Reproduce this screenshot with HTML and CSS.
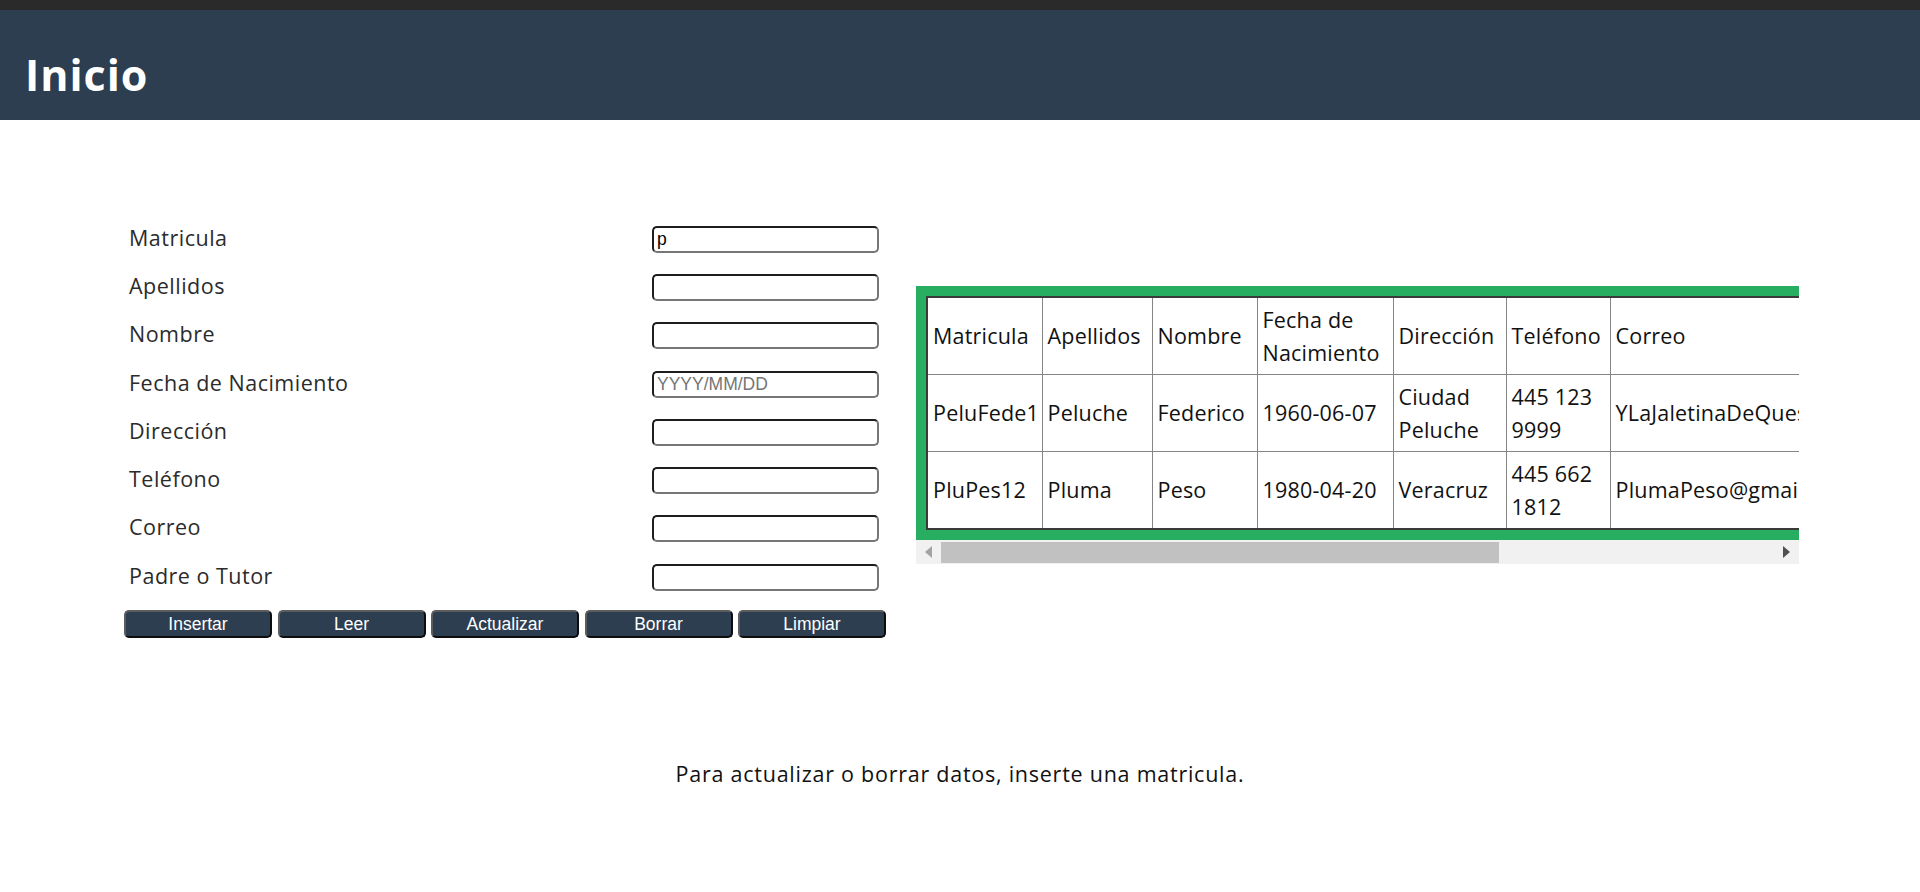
FILE: index.html
```html
<!DOCTYPE html>
<html lang="es">
<head>
<meta charset="utf-8">
<title>Inicio</title>
<link rel="stylesheet" href="styles.css">
</head>
<body>
<div class="topbar"></div>
<header class="header"><h1 class="title">Inicio</h1></header>
<main class="main">
  <section class="form">
    <div class="field"><label class="label">Matricula</label><input class="input" type="text" value="p"></div>
    <div class="field"><label class="label">Apellidos</label><input class="input" type="text"></div>
    <div class="field"><label class="label">Nombre</label><input class="input" type="text"></div>
    <div class="field"><label class="label">Fecha de Nacimiento</label><input class="input" type="text" placeholder="YYYY/MM/DD"></div>
    <div class="field"><label class="label">Dirección</label><input class="input" type="text"></div>
    <div class="field"><label class="label">Teléfono</label><input class="input" type="text"></div>
    <div class="field"><label class="label">Correo</label><input class="input" type="text"></div>
    <div class="field"><label class="label">Padre o Tutor</label><input class="input" type="text"></div>
    <div class="buttons">
      <button class="btn">Insertar</button>
      <button class="btn">Leer</button>
      <button class="btn">Actualizar</button>
      <button class="btn">Borrar</button>
      <button class="btn">Limpiar</button>
    </div>
  </section>
  <section class="data">
    <div class="scroller">
      <div class="green">
        <table class="table">
          <colgroup>
            <col class="c1"><col class="c2"><col class="c3"><col class="c4"><col class="c5"><col class="c6"><col class="c7"><col class="c8">
          </colgroup>
          <tr><td>Matricula</td><td>Apellidos</td><td>Nombre</td><td>Fecha de Nacimiento</td><td>Dirección</td><td>Teléfono</td><td>Correo</td><td>Padre o Tutor</td></tr>
          <tr><td>PeluFede1</td><td>Peluche</td><td>Federico</td><td>1960-06-07</td><td>Ciudad Peluche</td><td>445 123 9999</td><td>YLaJaletinaDeQueso@gmail.com</td><td>Peluchón</td></tr>
          <tr><td>PluPes12</td><td>Pluma</td><td>Peso</td><td>1980-04-20</td><td>Veracruz</td><td>445 662 1812</td><td>PlumaPeso@gmail.com</td><td>Plumón</td></tr>
        </table>
      </div>
    </div>
    <div class="scrollbar">
      <div class="sb-btn"><span class="arrow-left"></span></div>
      <div class="thumb"></div>
      <div class="sb-space"></div>
      <div class="sb-btn"><span class="arrow-right"></span></div>
    </div>
  </section>
</main>
<p class="note">Para actualizar o borrar datos, inserte una matricula.</p>
</body>
</html>
```
FILE: styles.css
```css
html, body {
  margin: 0;
  padding: 0;
  background: #ffffff;
}
body {
  font-family: "Open Sans", "DejaVu Sans", sans-serif;
  color: #222;
}
.topbar {
  height: 10px;
  background: #2a2a2a;
}
.header {
  height: 110px;
  box-sizing: border-box;
  background: #2c3e50;
  padding: 36px 24px 0 25px;
}
.title {
  margin: 0;
  font-family: "Open Sans", sans-serif;
  font-weight: 700;
  font-size: 43px;
  letter-spacing: 1px;
  line-height: 57px;
  color: #ffffff;
}
.main {
  display: flex;
  align-items: center;
  gap: 30px;
  padding: 95px 0 0 124px;
}
.form {
  width: 762px;
  flex: none;
}
.field {
  height: 48.3px;
  display: flex;
  align-items: center;
  justify-content: space-between;
  padding: 0 7px 0 5px;
}
.label {
  font-size: 21.5px;
  letter-spacing: 0.5px;
  line-height: 33px;
  margin-bottom: 4px;
  color: #2b2b2b;
}
.input {
  width: 227px;
  height: 27px;
  box-sizing: border-box;
  border: 2px solid;
  border-color: #1e1e1e #767676 #767676 #1e1e1e;
  border-radius: 5px;
  padding: 0 3px;
  font-family: "Liberation Sans", Arial, sans-serif;
  font-size: 17.5px;
  color: #000;
  background: #fff;
  outline: none;
}
.input::placeholder {
  color: #757575;
}
.buttons {
  display: flex;
  gap: 5.5px;
  margin-top: 9px;
}
.btn {
  flex: 1;
  height: 28px;
  box-sizing: border-box;
  padding: 0;
  background: #2c3e50;
  color: #ffffff;
  border: 2px solid;
  border-color: #5c5c5c #0d0d0d #0d0d0d #5c5c5c;
  border-radius: 5px;
  font-family: "Liberation Sans", Arial, sans-serif;
  font-size: 17.5px;
  line-height: 22px;
}
.data {
  width: 883px;
  flex: none;
  margin-bottom: 4px;
}
.scroller {
  width: 883px;
  overflow: hidden;
}
.green {
  width: max-content;
  border: 10px solid #27ae60;
  border-right: none;
  background: #27ae60;
}
.table {
  border-collapse: collapse;
  table-layout: fixed;
  width: 1193px;
  border: 2px solid #3a3a3a;
  background: #ffffff;
  font-size: 21.5px;
  letter-spacing: 0.2px;
  line-height: 33px;
  color: #111;
}
.table td {
  border: 1px solid #858585;
  padding: 5px 4px 5px 5px;
  vertical-align: middle;
  text-align: left;
}
.c1 { width: 115px; }
.c2 { width: 110px; }
.c3 { width: 105px; }
.c4 { width: 136px; }
.c5 { width: 113px; }
.c6 { width: 104px; }
.c7 { width: 350px; }
.c8 { width: 160px; }
.scrollbar {
  width: 883px;
  height: 24px;
  display: flex;
  background: #f1f1f1;
}
.sb-btn {
  width: 25px;
  flex: none;
  display: flex;
  align-items: center;
  justify-content: center;
}
.thumb {
  width: 558px;
  height: 21px;
  margin-top: 2px;
  background: #c1c1c1;
  flex: none;
}
.sb-space {
  flex: 1;
}
.arrow-left {
  width: 0;
  height: 0;
  border-top: 6px solid transparent;
  border-bottom: 6px solid transparent;
  border-right: 7px solid #a3a3a3;
}
.arrow-right {
  width: 0;
  height: 0;
  border-top: 6px solid transparent;
  border-bottom: 6px solid transparent;
  border-left: 7px solid #505050;
}
.note {
  margin: 119px 0 0;
  text-align: center;
  font-size: 21.5px;
  letter-spacing: 0.75px;
  line-height: 33px;
  color: #111;
}
```
